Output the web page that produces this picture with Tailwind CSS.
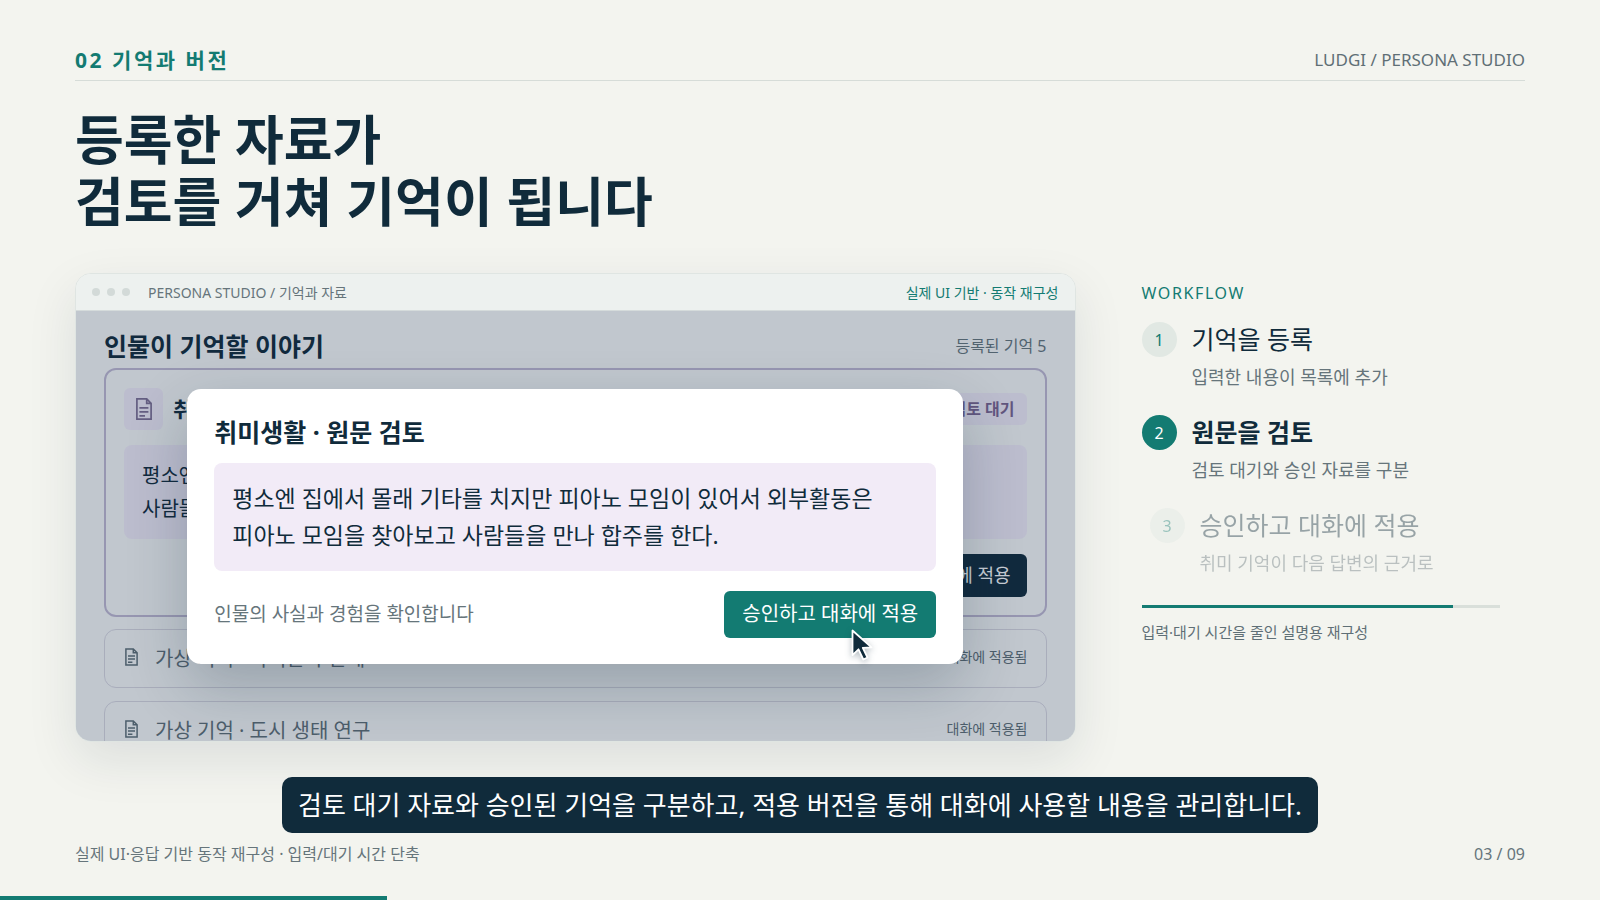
<!DOCTYPE html>
<html lang="ko">
<head>
    <meta charset="UTF-8">
    <meta name="viewport" content="width=device-width, initial-scale=1.0">
    <title>LUDGI / PERSONA STUDIO</title>
    <script src="https://cdn.jsdelivr.net/npm/@tailwindcss/browser@4"></script>
</head>
<body class="h-screen overflow-hidden flex flex-col bg-[#f3f4ef] text-[#102b3b] font-['Noto_Sans','Noto_Sans_CJK_KR',sans-serif]">
    <header class="mx-[75px] pt-11 pb-1 flex items-center justify-between border-b border-[#d6dcd8]">
        <p class="text-[21px] leading-8 font-bold tracking-[0.12em] text-[#137b72]">02 기억과 버전</p>
        <p class="text-[17px] leading-8 text-[#5f6f76]">LUDGI / PERSONA STUDIO</p>
    </header>

    <h1 class="mx-[75px] mt-7 text-[53px] leading-[62px] font-bold">등록한 자료가<br>검토를 거쳐 기억이 됩니다</h1>

    <main class="mx-[75px] mt-10 flex-1 min-h-0 flex">
        <!-- app window -->
        <section class="w-[69%] flex flex-col rounded-2xl border border-[#dfe5e2] overflow-hidden bg-[#f7f9f8] shadow-[0_18px_50px_rgba(16,43,59,0.10)]">
            <div class="h-[37px] shrink-0 px-4 flex items-center border-b border-[#d5dbdb] bg-[#edf1ef] text-[14px]">
                <div class="flex gap-[7px]">
                    <span class="w-2 h-2 rounded-full bg-[#d3dad8]"></span>
                    <span class="w-2 h-2 rounded-full bg-[#d3dad8]"></span>
                    <span class="w-2 h-2 rounded-full bg-[#d3dad8]"></span>
                </div>
                <p class="ml-[18px] flex-1 text-[#66757b]">PERSONA STUDIO / 기억과 자료</p>
                <p class="text-[#137b72]">실제 UI 기반 · 동작 재구성</p>
            </div>

            <div class="relative flex-1 min-h-0 overflow-hidden px-7 pt-[19px]">
                <div class="flex items-center justify-between">
                    <h2 class="text-[25px] leading-8 font-bold">인물이 기억할 이야기</h2>
                    <p class="text-[16px] text-[#66757b]">등록된 기억 5</p>
                </div>

                <article class="mt-[6px] px-[18px] pt-[18px] pb-[18px] rounded-xl border-2 border-[#c0b9d2]">
                    <div class="flex items-center">
                        <span class="w-[39px] h-[42px] rounded-md bg-[#f1ebf7] flex items-center justify-center text-[#7d6f94]">
                            <svg class="w-[16px] h-[22px]" viewBox="0 0 16 22" fill="none" stroke="currentColor" stroke-width="1.7"><path d="M.9.9h9.8l4.4 4.4v15.8H.9zM10.7.9v4.4h4.4M3.4 9.8h9M3.4 13.8h9M3.4 17.8h5.6"/></svg>
                        </span>
                        <h3 class="ml-[10px] flex-1 text-[21px] leading-8 font-bold">취미생활</h3>
                        <span class="px-3 text-[16px] leading-8 font-bold rounded-md bg-[#f1ebf7] text-[#7a6590]">검토 대기</span>
                    </div>
                    <p class="mt-[15px] px-[18px] py-[14px] rounded-lg bg-[#f1ebf7] text-[20px] leading-[33px]">평소엔 집에서 몰래 기타를 치지만 피아노 모임이 있어서 외부활동은 피아노 모임을 찾아보고<br>사람들을 만나 합주를 한다.</p>
                    <div class="mt-[15px] flex justify-end">
                        <button type="button" class="h-[43px] px-4 rounded-md bg-[#102b3b] text-white text-[18px]">대화에 적용</button>
                    </div>
                </article>

                <ul class="mt-3 flex flex-col gap-[13px] text-[#5f6f76]">
                    <li class="h-[59px] px-[18px] pb-1 flex items-center rounded-xl border border-[#d8d6df]">
                        <svg class="w-[13px] h-[18px] ml-[2px] mr-[17px]" viewBox="0 0 13 18" fill="none" stroke="currentColor" stroke-width="1.5"><path d="M.9.9h7.4l3.8 3.8v12.4H.9zM8.3.9v3.8h3.8M3 8h7M3 11h7M3 14.2h4.4"/></svg>
                        <span class="flex-1 pt-1 text-[20px]">가상 기억 · 가치관과 관계</span>
                        <span class="text-[14px]">대화에 적용됨</span>
                    </li>
                    <li class="h-[59px] px-[18px] pb-1 flex items-center rounded-xl border border-[#d8d6df]">
                        <svg class="w-[13px] h-[18px] ml-[2px] mr-[17px]" viewBox="0 0 13 18" fill="none" stroke="currentColor" stroke-width="1.5"><path d="M.9.9h7.4l3.8 3.8v12.4H.9zM8.3.9v3.8h3.8M3 8h7M3 11h7M3 14.2h4.4"/></svg>
                        <span class="flex-1 pt-1 text-[20px]">가상 기억 · 도시 생태 연구</span>
                        <span class="text-[14px]">대화에 적용됨</span>
                    </li>
                </ul>

                <!-- review dialog -->
                <div class="absolute inset-0 flex items-center justify-center bg-[#142a4a]/24">
                    <div role="dialog" aria-labelledby="review-title" class="w-[776px] max-w-full px-[27px] pt-[27px] pb-[26px] rounded-[14px] bg-white shadow-[0_22px_60px_rgba(16,43,59,0.24)]">
                        <h2 id="review-title" class="text-[25px] leading-8 font-bold">취미생활 · 원문 검토</h2>
                        <p class="mt-[15px] px-[18px] py-[17px] rounded-lg bg-[#f2ebf7] text-[23px] leading-[37px]">평소엔 집에서 몰래 기타를 치지만 피아노 모임이 있어서 외부활동은<br>피아노 모임을 찾아보고 사람들을 만나 합주를 한다.</p>
                        <div class="mt-5 flex items-center justify-between">
                            <p class="text-[19px] text-[#66757b]">인물의 사실과 경험을 확인합니다</p>
                            <button type="button" class="relative h-[47px] px-[18px] rounded-md bg-[#137b72] text-white text-[20px]">
                                승인하고 대화에 적용
                                <svg class="absolute left-[127px] top-[38px] w-[22px] h-[33px] drop-shadow-[0_2px_3px_rgba(16,43,59,0.3)]" viewBox="0 0 22 33" fill="#102b3b" stroke="#fff" stroke-width="1.8" stroke-linejoin="round"><path d="M1.5 1.5v24.6l6-5.8 4.8 10.2 4.2-2-4.7-9.6 8.7-.6z"/></svg>
                            </button>
                        </div>
                    </div>
                </div>
            </div>
        </section>

        <aside class="flex-1 ml-[66px] mr-[25px] pt-2">
            <h2 class="text-[16px] leading-6 tracking-[0.1em] text-[#137b72]">WORKFLOW</h2>
            <ol class="mt-[17px] flex flex-col gap-6">
                <li class="flex gap-[15px]">
                    <span class="w-[35px] h-[35px] shrink-0 rounded-full bg-[#e1e8e3] text-[#137b72] text-[16px] flex items-center justify-center">1</span>
                    <div>
                        <h3 class="text-[25px] leading-[35px]">기억을 등록</h3>
                        <p class="mt-[6px] text-[18px] leading-7 text-[#66757b]">입력한 내용이 목록에 추가</p>
                    </div>
                </li>
                <li class="flex gap-[15px]">
                    <span class="w-[35px] h-[35px] shrink-0 rounded-full bg-[#137b72] text-white text-[16px] flex items-center justify-center">2</span>
                    <div>
                        <h3 class="text-[25px] leading-[35px] font-bold">원문을 검토</h3>
                        <p class="mt-[6px] text-[18px] leading-7 text-[#66757b]">검토 대기와 승인 자료를 구분</p>
                    </div>
                </li>
                <li class="ml-2 flex gap-[15px] opacity-40">
                    <span class="w-[35px] h-[35px] shrink-0 rounded-full bg-[#e1e8e3] text-[#137b72] text-[16px] flex items-center justify-center">3</span>
                    <div>
                        <h3 class="text-[25px] leading-[35px]">승인하고 대화에 적용</h3>
                        <p class="mt-[6px] text-[18px] leading-7 text-[#66757b]">취미 기억이 다음 답변의 근거로</p>
                    </div>
                </li>
            </ol>
            <div class="mt-7 h-[3px] bg-[#d9dfda]">
                <div class="h-full bg-[#137b72]" style="width: 87%"></div>
            </div>
            <p class="mt-3 text-[15px] leading-6 text-[#5f6f76]">입력·대기 시간을 줄인 설명용 재구성</p>
        </aside>
    </main>

    <p class="mt-[35px] self-center px-4 text-[26px] leading-[56px] text-white bg-[#102b3b] rounded-[10px]">검토 대기 자료와 승인된 기억을 구분하고, 적용 버전을 통해 대화에 사용할 내용을 관리합니다.</p>

    <footer class="mx-[75px] mt-[9px] mb-[30px] flex justify-between text-[16px] leading-6 text-[#66757b]">
        <p>실제 UI·응답 기반 동작 재구성 · 입력/대기 시간 단축</p>
        <p>03 / 09</p>
    </footer>
    <div class="h-1 shrink-0">
        <div class="h-full bg-[#137b72]" style="width: 24.2%"></div>
    </div>
</body>
</html>
